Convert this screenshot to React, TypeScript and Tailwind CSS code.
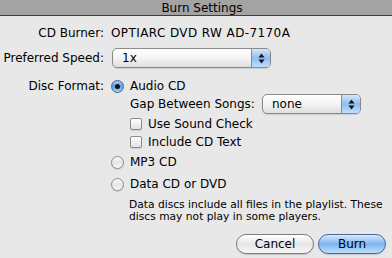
import React from 'react';

const font = "font-['Lucida_Grande','DejaVu_Sans',sans-serif]";

const Arrows = () => (
  <svg width="7" height="11" viewBox="0 0 7 11">
    <path d="M3.5 0.5 L6.5 4.5 L0.5 4.5 Z" fill="#111" />
    <path d="M3.5 10.5 L6.5 6.5 L0.5 6.5 Z" fill="#111" />
  </svg>
);

const Popup: React.FC<{ value: string; className?: string }> = ({ value, className = '' }) => (
  <div
    className={`flex h-[20px] items-stretch overflow-hidden rounded-[5px] border border-[#8a8a8a] bg-gradient-to-b from-white via-[#f4f4f4] to-[#dedede] shadow-[0_1px_1px_rgba(0,0,0,0.12)] ${className}`}
  >
    <span className="flex-1 pl-[9px] text-[12px] leading-[18px] text-black">{value}</span>
    <span className="flex w-[19px] items-center justify-center border-l border-[#6f8fb8] bg-gradient-to-b from-[#d6e8fb] via-[#8ebdf0] to-[#bfdefd]">
      <Arrows />
    </span>
  </div>
);

const Radio: React.FC<{ checked?: boolean }> = ({ checked }) =>
  checked ? (
    <span className="flex h-[13px] w-[13px] shrink-0 items-center justify-center rounded-full border border-[#3a679c] bg-gradient-to-b from-[#a9cdf3] via-[#5d9ce0] to-[#a8d3fb]">
      <span className="h-[5px] w-[5px] rounded-full bg-[#111]" />
    </span>
  ) : (
    <span className="h-[13px] w-[13px] shrink-0 rounded-full border border-[#8c8c8c] bg-gradient-to-b from-[#f9f9f9] via-[#e4e4e4] to-[#fafafa] shadow-[0_1px_1px_rgba(0,0,0,0.12)]" />
  );

const Checkbox = () => (
  <span className="h-[12px] w-[12px] shrink-0 rounded-[2px] border border-[#8a8a8a] bg-gradient-to-b from-white via-[#f0f0f0] to-[#e2e2e2] shadow-[0_1px_1px_rgba(0,0,0,0.1)]" />
);

export default function App() {
  return (
    <div className={`h-[258px] w-[392px] overflow-hidden bg-[#e8e8e8] text-[12px] text-black ${font}`}>
      <div className="flex h-[16px] items-center justify-center border-b border-[#3d3d3d] bg-[#a3a3a3] pl-[12px] text-[12px] leading-none">
        Burn Settings
      </div>

      <div className="flex flex-col pt-[8px]">
        <div className="flex h-[18px] items-center">
          <span className="w-[104px] text-right">CD Burner:</span>
          <span className="pl-[7px] tracking-[0.4px]">OPTIARC DVD RW AD-7170A</span>
        </div>

        <div className="mt-[6px] flex h-[20px] items-center">
          <span className="w-[104px] text-right">Preferred Speed:</span>
          <Popup value="1x" className="ml-[8px] w-[159px]" />
        </div>

        <div className="mt-[10px] flex h-[16px] items-center">
          <span className="w-[104px] text-right">Disc Format:</span>
          <span className="ml-[7px] flex items-center gap-[6px]">
            <Radio checked />
            Audio CD
          </span>
        </div>

        <div className="ml-[130px] flex flex-col">
          <div className="flex h-[20px] items-center">
            <span>Gap Between Songs:</span>
            <Popup value="none" className="ml-auto mr-[31px] w-[99px]" />
          </div>
          <div className="mt-[1px] flex h-[18px] items-center gap-[6px]">
            <Checkbox />
            Use Sound Check
          </div>
          <div className="flex h-[18px] items-center gap-[6px]">
            <Checkbox />
            Include CD Text
          </div>
        </div>

        <div className="ml-[111px] mt-[2px] flex h-[18px] items-center gap-[6px]">
          <Radio />
          MP3 CD
        </div>
        <div className="ml-[111px] mt-[4px] flex h-[18px] items-center gap-[6px]">
          <Radio />
          Data CD or DVD
        </div>
        <p className="ml-[129px] mt-[6px] text-[10.7px] leading-[12px]">
          Data discs include all files in the playlist. These
          <br />
          discs may not play in some players.
        </p>

        <div className="mt-[11px] flex justify-end gap-[4px] pr-[6px]">
          <button className="h-[20px] w-[78px] rounded-full border border-[#7c7c7c] bg-gradient-to-b from-white via-[#e6e6e6] to-[#f7f7f7] text-[12px] leading-none shadow-[0_1px_1px_rgba(0,0,0,0.15)]">
            Cancel
          </button>
          <button className="h-[20px] w-[68px] rounded-full border border-[#47699a] bg-gradient-to-b from-[#d9eafc] via-[#7fb3ee] to-[#bde0fd] text-[12px] leading-none shadow-[0_1px_1px_rgba(0,0,0,0.15)]">
            Burn
          </button>
        </div>
      </div>
    </div>
  );
}
